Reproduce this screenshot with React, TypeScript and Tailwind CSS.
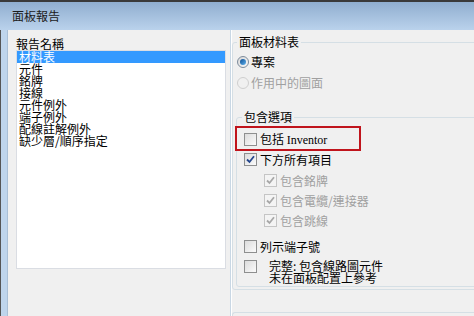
import React from "react";

const cjk = { fontFamily: '"Noto Sans CJK TC", "Noto Sans", sans-serif' };

function Check({ checked, disabled }: { checked?: boolean; disabled?: boolean }) {
  return (
    <span
      className={`relative flex h-[13px] w-[13px] shrink-0 items-center justify-center border ${
        disabled ? "border-[#c5c5c5] bg-[#f4f4f4]" : "border-[#8e8f8f] bg-gradient-to-br from-[#dcdcdc] to-[#fbfbfb]"
      }`}
    >
      {checked && (
        <svg width="9" height="9" viewBox="0 0 9 9">
          <path
            d="M1 4.5 L3.5 7 L8 1.2"
            fill="none"
            stroke={disabled ? "#a8a8a8" : "#24468c"}
            strokeWidth="1.8"
          />
        </svg>
      )}
    </span>
  );
}

function Radio({ on, disabled }: { on?: boolean; disabled?: boolean }) {
  return (
    <span
      className={`flex h-[12px] w-[12px] shrink-0 items-center justify-center rounded-full border ${
        disabled ? "border-[#cfcfcf] bg-[#f0f0f0]" : "border-[#7d8c9c] bg-gradient-to-br from-[#d6d6d6] to-[#fafafa]"
      }`}
    >
      {on && <span className="h-[6px] w-[6px] rounded-full bg-gradient-to-br from-[#0a4f94] to-[#5fb2ee]" />}
    </span>
  );
}

const items = ["材料表", "元件", "銘牌", "接線", "元件例外", "端子例外", "配線註解例外", "缺少層/順序指定"];

export default function App() {
  return (
    <div className="flex h-[316px] w-[474px] flex-col overflow-hidden bg-[#f0f0f0] text-[12px] text-black" style={cjk}>
      <div className="h-[2px] shrink-0 bg-[#3a3a3a]" />
      <div className="flex h-[28px] shrink-0 items-center bg-gradient-to-b from-[#90aecf] to-[#bad2ec] pl-[12px] text-[12px] text-[#1c1c1c]">
        面板報告
      </div>
      <div className="flex min-h-0 flex-1">
        <div className="w-[8px] shrink-0 border-l border-r border-l-[#555] border-r-[#a9bfd6] bg-[#bfd5ec]" />
        <div className="flex w-[222px] shrink-0 flex-col pl-[8px]">
          <div className="mt-[8px] h-[12px] leading-[12px]">報告名稱</div>
          <div className="h-[219px] w-[210px] shrink-0 border border-[#dadde3] bg-white">
            {items.map((t, i) => (
              <div
                key={t}
                className={`h-[12px] pl-[2px] leading-[12px] ${i === 0 ? "bg-[#3399ff] text-white" : ""}`}
              >
                {t}
              </div>
            ))}
          </div>
        </div>
        <div className="w-[2px] shrink-0 border-l border-[#c9d7e4] bg-white" />
        <div className="flex-1 overflow-hidden">
          <fieldset className="mt-[6px] w-[260px] rounded-[3px] border border-[#d5dfe5] pb-[2px]">
            <legend className="ml-[4px] px-[2px] leading-[12px]">面板材料表</legend>
            <div className="mt-[7px] flex h-[14px] items-center gap-[2px] pl-[4px]">
              <Radio on />
              <span>專案</span>
            </div>
            <div className="mt-[7px] flex h-[14px] items-center gap-[2px] pl-[4px] text-[#a0a0a0]">
              <Radio disabled />
              <span>作用中的圖面</span>
            </div>
            <fieldset className="relative ml-[3px] mt-[21px] rounded-[3px] border border-[#d5dfe5] pb-[2px]">
              <legend className="ml-[5px] px-[2px] leading-[12px]">包含選項</legend>
              <div className="absolute left-[-2px] top-[3px] h-[25px] w-[126px] border-2 border-[#c0141c]" />
              <div className="mt-[10px] flex h-[13px] items-center gap-[3px] pl-[7px]">
                <Check />
                <span>
                  包括 <span style={{ fontFamily: '"Liberation Serif", serif' }}>Inventor</span>
                </span>
              </div>
              <div className="mt-[7px] flex h-[13px] items-center gap-[3px] pl-[7px]">
                <Check checked />
                <span>下方所有項目</span>
              </div>
              <div className="mt-[8px] flex h-[13px] items-center gap-[3px] pl-[27px] text-[#a0a0a0]">
                <Check checked disabled />
                <span>包含銘牌</span>
              </div>
              <div className="mt-[7px] flex h-[13px] items-center gap-[3px] pl-[27px] text-[#a0a0a0]">
                <Check checked disabled />
                <span>包含電纜/連接器</span>
              </div>
              <div className="mt-[7px] flex h-[13px] items-center gap-[3px] pl-[27px] text-[#a0a0a0]">
                <Check checked disabled />
                <span>包含跳線</span>
              </div>
              <div className="mt-[13px] flex h-[13px] items-center gap-[3px] pl-[7px]">
                <Check />
                <span>列示端子號</span>
              </div>
              <div className="mt-[7px] flex items-start gap-[12px] pl-[7px]">
                <Check />
                <div className="leading-[12px]">
                  <div>完整: 包含線路圖元件</div>
                  <div>未在面板配置上參考</div>
                </div>
              </div>
            </fieldset>
          </fieldset>
          <div className="mt-[22px] h-[10px] w-[260px] rounded-t-[3px] border-l border-t border-[#d5dfe5]" />
        </div>
      </div>
    </div>
  );
}
